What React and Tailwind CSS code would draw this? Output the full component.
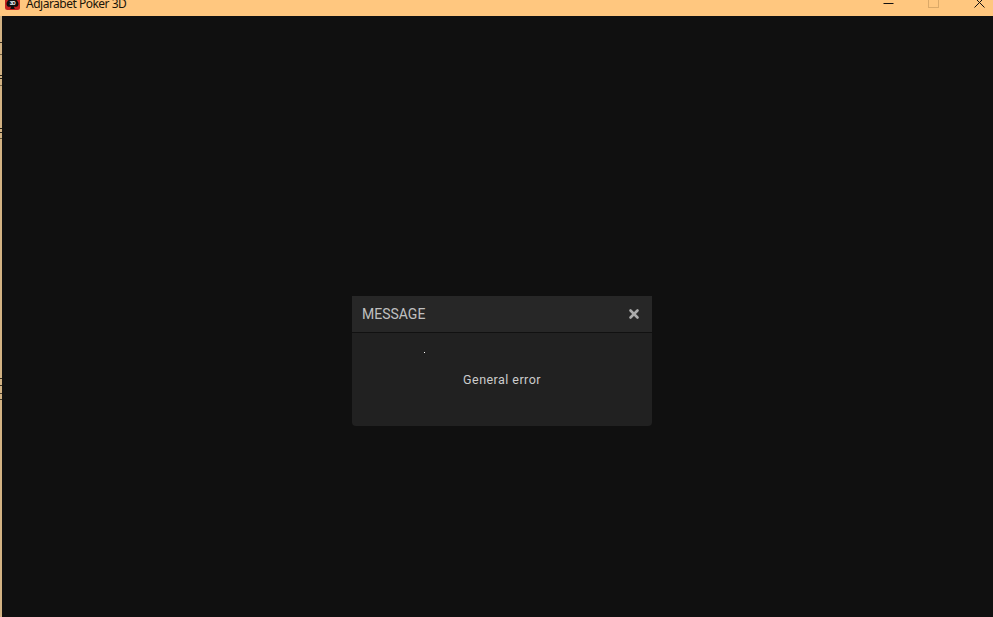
import { X } from 'lucide-react';

// dark specks on the left window edge, y in page pixels
const edgeTicks = [
  { y: 42, color: '#3a3020' },
  { y: 54, color: '#6b5a3c' },
  { y: 75, color: '#2a2418' },
  { y: 78, color: '#2a2418' },
  { y: 85, color: '#7a6848' },
  { y: 128, color: '#2a2418' },
  { y: 132, color: '#2a2418' },
  { y: 138, color: '#6b5a3c' },
  { y: 378, color: '#3a3020' },
  { y: 385, color: '#3a3020' },
  { y: 393, color: '#4a3e2a' },
  { y: 399, color: '#4a3e2a' },
];

function AppIcon() {
  return (
    <svg width="15" height="15" viewBox="0 0 15 15" className="shrink-0">
      <rect x="0" y="0" width="15" height="15" rx="2.5" fill="#c4221f" />
      <path d="M7.5 1.5 C9 3.5 13.5 5.5 13.5 9 C13.5 11.8 10.6 12.4 8.8 11.4 L9.8 14 L5.2 14 L6.2 11.4 C4.4 12.4 1.5 11.8 1.5 9 C1.5 5.5 6 3.5 7.5 1.5 Z" fill="#0d0d0d" />
      <text x="7.5" y="10.4" textAnchor="middle" fontSize="5" fontWeight="700" fill="#ffffff" fontFamily="Liberation Sans, sans-serif">3D</text>
    </svg>
  );
}

function TitleBar() {
  return (
    <div className="flex h-4 shrink-0 items-end overflow-hidden bg-[#ffc77f] pb-[6px] font-['Noto_Sans',sans-serif] text-[12px] leading-4 tracking-[-0.5px] text-[#1a1408]">
      <div className="ml-[5px] flex items-end gap-[6px]">
        <AppIcon />
        <span className="mb-[-2px]">Adjarabet Poker 3D</span>
      </div>
      <div className="ml-auto flex items-end">
        <svg width="11" height="11" viewBox="0 0 11 11" className="mr-[34px] mb-[1px]">
          <path d="M0.5 5.5 H10.5" stroke="#111" strokeWidth="1" />
        </svg>
        <svg width="11" height="11" viewBox="0 0 11 11" className="mr-[35px] mb-[2px]">
          <rect x="0.5" y="0.5" width="10" height="10" fill="none" stroke="#dba968" strokeWidth="1" />
        </svg>
        <svg width="11" height="11" viewBox="0 0 11 11" className="mr-[8px] mb-[2px]">
          <path d="M0.5 0.5 L10.5 10.5 M10.5 0.5 L0.5 10.5" stroke="#111" strokeWidth="1" />
        </svg>
      </div>
    </div>
  );
}

function MessageDialog() {
  return (
    <div className="relative flex h-[130px] w-[300px] flex-col overflow-hidden rounded-b-[4px] bg-[#212121] font-['Roboto',sans-serif]">
      <div className="flex h-[37px] shrink-0 items-center justify-between border-b border-[#111111] bg-[#272727] pl-[10px] pr-[11px]">
        <span className="text-[14px] leading-4 text-[#c0c0c0]">MESSAGE</span>
        <X size={14} strokeWidth={4.5} className="text-[#aaaaaa]" />
      </div>
      <div className="flex flex-1 justify-center pt-[39px]">
        <span className="text-[12.5px] leading-4 tracking-[0.45px] text-[#cccccc]">General error</span>
      </div>
      <span className="absolute left-[72px] top-[56px] h-px w-px bg-white" />
    </div>
  );
}

export default function App() {
  return (
    <div className="flex h-[617px] w-[993px] flex-col overflow-hidden bg-[#101010]">
      <TitleBar />
      <div className="flex flex-1">
        <div className="relative w-[2px] shrink-0 bg-[#d2b283]">
          {edgeTicks.map((t) => (
            <span key={t.y} className="absolute left-0 h-px w-[2px]" style={{ top: t.y - 16, backgroundColor: t.color }} />
          ))}
        </div>
        <main className="flex-1 bg-[#101010] pl-[350px] pt-[280px]">
          <MessageDialog />
        </main>
      </div>
    </div>
  );
}
